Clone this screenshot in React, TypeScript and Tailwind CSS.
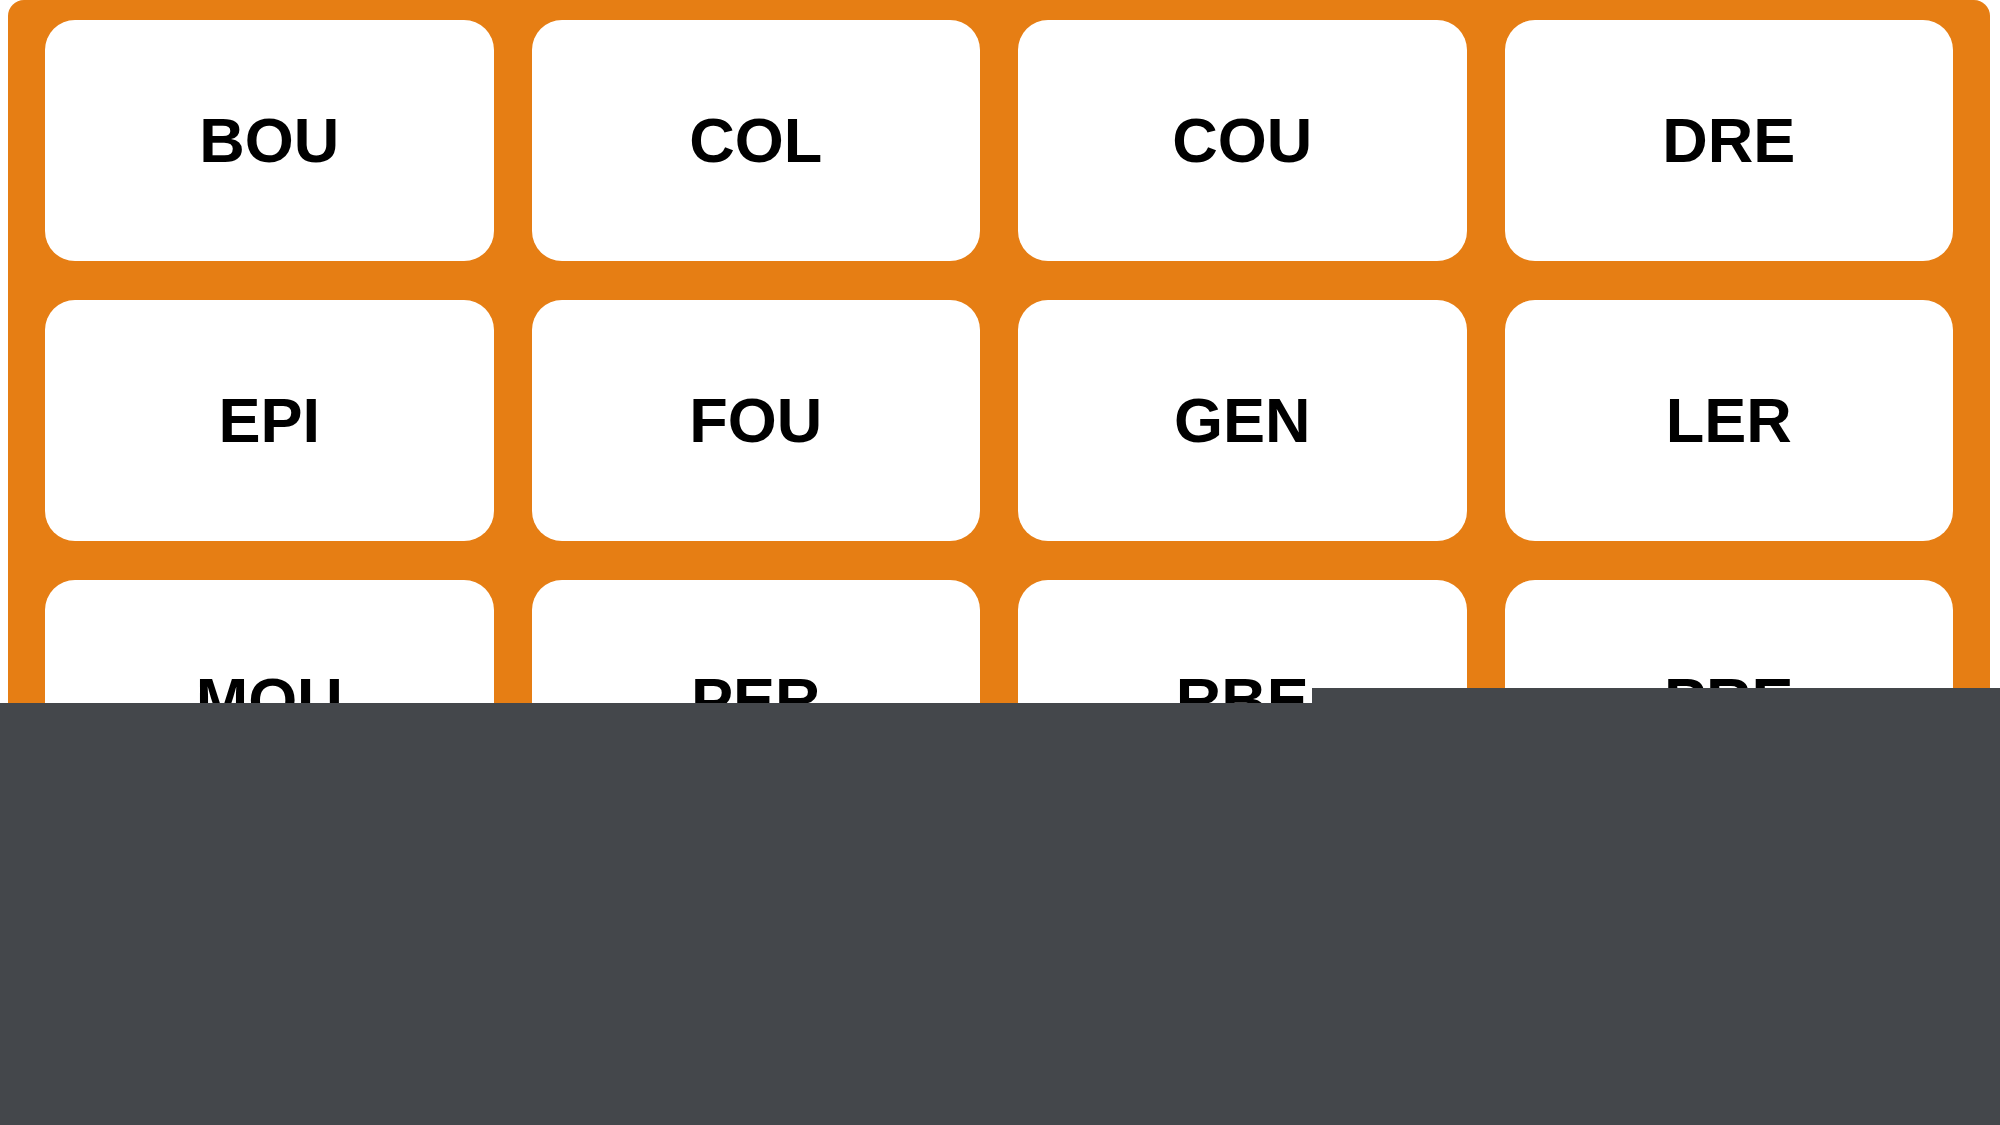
const rows: string[][] = [
  ["BOU", "COL", "COU", "DRE"],
  ["EPI", "FOU", "GEN", "LER"],
  ["MOU", "PER", "RBE", "PRE"],
];

function Tile({ label }: { label: string }) {
  return (
    <div className="flex h-[241px] items-center justify-center rounded-[30px] bg-white">
      <span className="text-[63px] font-bold leading-none text-black">
        {label}
      </span>
    </div>
  );
}

export default function App() {
  return (
    <div
      className="relative min-h-screen overflow-hidden bg-white"
      style={{ fontFamily: '"Liberation Sans", Arial, sans-serif' }}
    >
      <div className="ml-[8px] mr-[10px] rounded-[16px] bg-[#e67e14] px-[37px] pb-[37px] pt-[20px]">
        <div className="grid grid-cols-4 gap-x-[38px] gap-y-[39px]">
          {rows.flat().map((label) => (
            <Tile key={label} label={label} />
          ))}
        </div>
      </div>

      {/* dark panel covering the lower part of the page */}
      <div className="fixed inset-x-0 bottom-0 top-[703px] bg-[#44474b]" />
      <div className="fixed bottom-0 left-[1312px] right-0 top-[688px] bg-[#44474b]" />
    </div>
  );
}
